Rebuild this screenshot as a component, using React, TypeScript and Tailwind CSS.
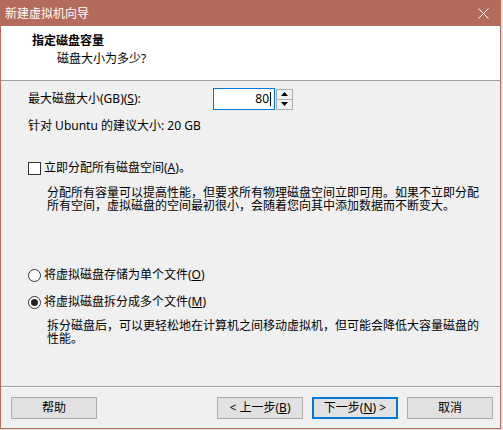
import React from 'react';

const font = { fontFamily: '"Noto Sans", "Noto Sans CJK SC", sans-serif' };

function Btn({ children, focused }: { children: React.ReactNode; focused?: boolean }) {
  return (
    <div
      className={
        'w-[86px] h-[22px] flex items-center justify-center bg-[#e1e1e1] text-[12px] text-black ' +
        (focused ? 'border-2 border-[#0078d7]' : 'border border-[#adadad]')
      }
    >
      {children}
    </div>
  );
}

export default function App() {
  return (
    <div className="w-[503px] h-[430px] bg-[#e3e3e3] overflow-hidden" style={font}>
      <div className="w-[501px] h-[429px] border border-[#b46b5b] bg-[#f0f0f0] flex flex-col">
        {/* title bar */}
        <div className="h-[25px] bg-[#b46b5b] flex items-center justify-between pl-[4px] pr-[10px]">
          <span className="text-white text-[12px] leading-[16px]">新建虚拟机向导</span>
          <svg width="11" height="11" viewBox="0 0 11 11" className="mr-[1px]">
            <path d="M0.5 0.5 L10.5 10.5 M10.5 0.5 L0.5 10.5" stroke="#fff" strokeWidth="1" />
          </svg>
        </div>

        {/* header */}
        <div className="h-[55px] bg-white border-b border-[#a0a0a0] pl-[31px] pt-[7px]">
          <p className="text-[12px] leading-[16px] font-bold text-black">指定磁盘容量</p>
          <p className="text-[12px] leading-[16px] text-black pl-[25px] mt-[2px]">磁盘大小为多少?</p>
        </div>

        {/* body */}
        <div className="flex-1 flex flex-col pl-[27px] text-[12px] leading-[16px] text-black">
          <div className="flex items-center mt-[7px]">
            <span className="w-[185px]">
              最大磁盘大小(GB)(<span className="underline">S</span>):
            </span>
            <div className="w-[62px] h-[22px] bg-white border border-[#0078d7] flex items-center justify-end pr-[3px]">
              <span>80</span>
              <span className="w-px h-[14px] bg-black ml-px" />
            </div>
            <div className="w-[17px] h-[21px] ml-px border border-[#adadad] bg-[#f0f0f0] flex flex-col">
              <div className="flex-1 flex items-center justify-center border-b border-[#adadad]">
                <svg width="7" height="4" viewBox="0 0 7 4"><path d="M3.5 0 L7 4 L0 4 Z" fill="#000" /></svg>
              </div>
              <div className="flex-1 flex items-center justify-center">
                <svg width="7" height="4" viewBox="0 0 7 4"><path d="M0 0 L7 0 L3.5 4 Z" fill="#000" /></svg>
              </div>
            </div>
          </div>

          <p className="mt-[8px]">针对 Ubuntu 的建议大小: 20 GB</p>

          <div className="flex items-center mt-[26px]">
            <div className="w-[13px] h-[13px] border border-[#333] bg-white mr-[3px]" />
            <span>
              立即分配所有磁盘空间(<span className="underline">A</span>)。
            </span>
          </div>
          <p className="pl-[19px] mt-[10px] leading-[13px]">
            分配所有容量可以提高性能，但要求所有物理磁盘空间立即可用。如果不立即分配
            <br />
            所有空间，虚拟磁盘的空间最初很小，会随着您向其中添加数据而不断变大。
          </p>

          <div className="flex items-center mt-[55px]">
            <div className="w-[13px] h-[13px] rounded-full border border-[#333] bg-white mr-[3px]" />
            <span>
              将虚拟磁盘存储为单个文件(<span className="underline">O</span>)
            </span>
          </div>
          <div className="flex items-center mt-[11px]">
            <div className="w-[13px] h-[13px] rounded-full border border-[#333] bg-white mr-[3px] flex items-center justify-center">
              <div className="w-[7px] h-[7px] rounded-full bg-[#222]" />
            </div>
            <span>
              将虚拟磁盘拆分成多个文件(<span className="underline">M</span>)
            </span>
          </div>
          <p className="pl-[19px] mt-[9px] leading-[13px]">
            拆分磁盘后，可以更轻松地在计算机之间移动虚拟机，但可能会降低大容量磁盘的
            <br />
            性能。
          </p>
        </div>

        {/* footer */}
        <div className="border-t border-[#a0a0a0]">
          <div className="h-px bg-white" />
          <div className="flex justify-between pl-[10px] pr-[7px] pt-[9px] pb-[9px]">
            <Btn>帮助</Btn>
            <div className="flex gap-[9px]">
              <Btn>
                &lt; 上一步(<span className="underline">B</span>)
              </Btn>
              <Btn focused>
                下一步(<span className="underline">N</span>) &gt;
              </Btn>
              <Btn>取消</Btn>
            </div>
          </div>
        </div>
      </div>
    </div>
  );
}
